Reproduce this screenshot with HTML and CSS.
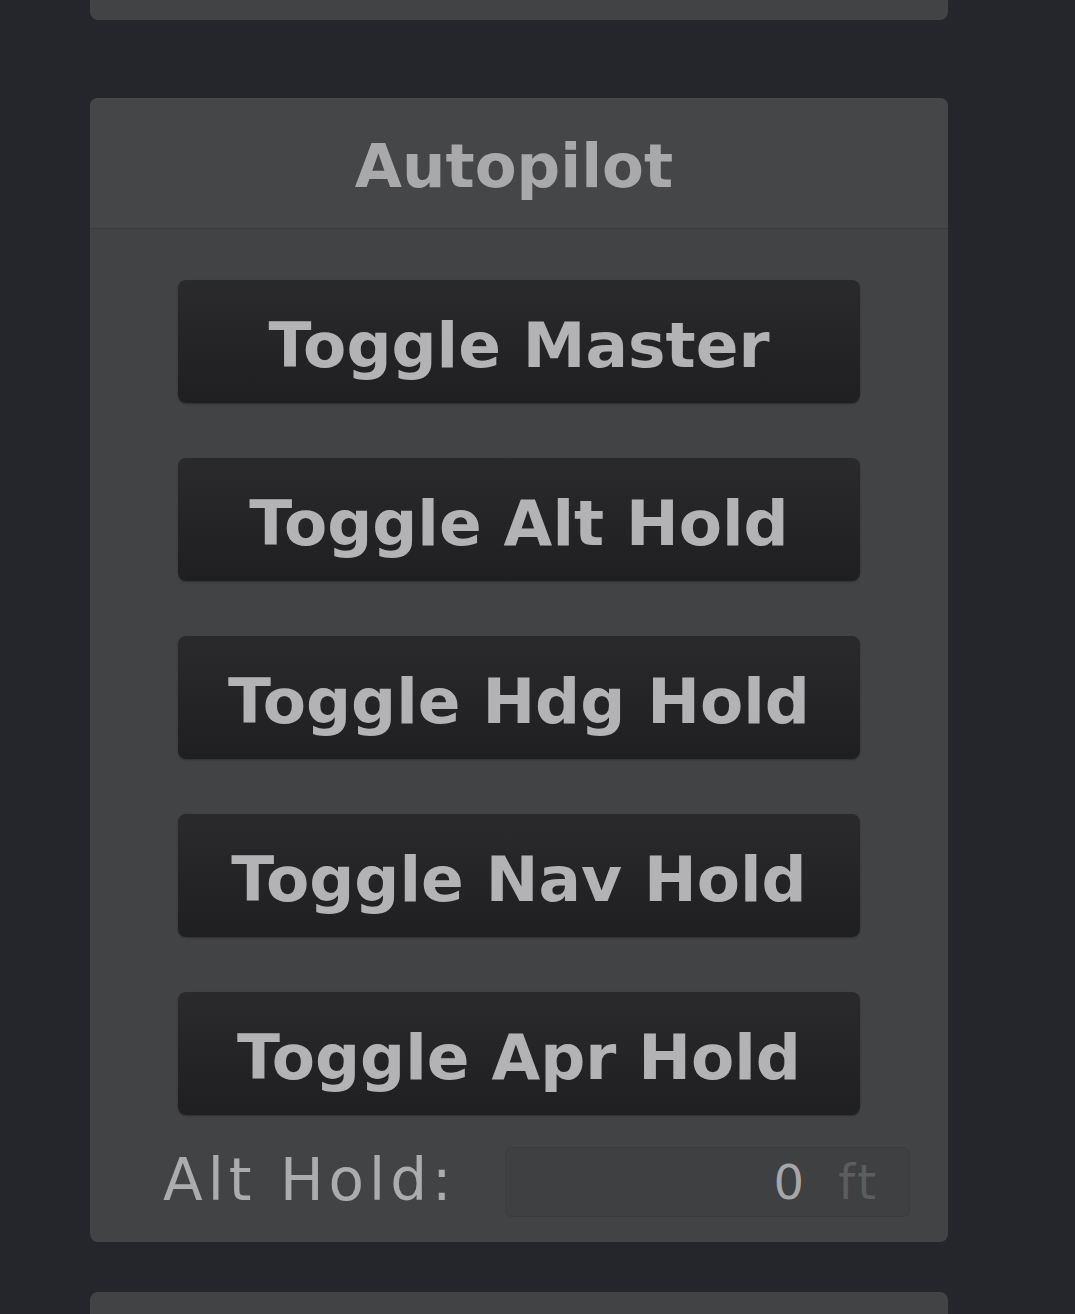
FILE: index.html
```html
<!DOCTYPE html>
<html>
<head>
<meta charset="utf-8">
<link rel="stylesheet" href="styles.css">
</head>
<body>
<div class="page">
  <div class="card card-top"></div>
  <section class="card panel">
    <header class="panel-head">Autopilot</header>
    <div class="panel-body">
      <button class="btn">Toggle Master</button>
      <button class="btn">Toggle Alt Hold</button>
      <button class="btn">Toggle Hdg Hold</button>
      <button class="btn">Toggle Nav Hold</button>
      <button class="btn">Toggle Apr Hold</button>
    </div>
    <div class="alt-row">
      <span class="alt-label">Alt Hold:</span>
      <div class="alt-input"><span class="alt-val">0</span><span class="alt-unit">ft</span></div>
    </div>
  </section>
  <div class="card card-bottom"></div>
</div>
</body>
</html>
```

FILE: styles.css
```css
html, body {
  margin: 0;
  padding: 0;
  background: #24262c;
  height: 1314px;
  overflow: hidden;
}
.page {
  display: flex;
  flex-direction: column;
  gap: 78px;
  padding-left: 90px;
  width: 858px;
  margin-top: -60px;
}
.card {
  background: #424345;
  border-radius: 8px;
}
.card-top {
  height: 80px;
}
.panel {
  height: 1144px;
  display: flex;
  flex-direction: column;
}
.panel-head {
  height: 131px;
  border-bottom: 1px solid #3a3b3d;
  background: #454648;
  border-radius: 8px 8px 0 0;
  display: flex;
  align-items: center;
  justify-content: center;
  font-family: "DejaVu Sans", sans-serif;
  font-weight: bold;
  font-size: 61px;
  color: #a9a9ab;
  padding-top: 4px;
  padding-right: 10px;
  box-sizing: border-box;
}
.panel-body {
  display: flex;
  flex-direction: column;
  gap: 55px;
  padding: 51px 88px 0 88px;
}
.btn {
  height: 123px;
  border: none;
  border-radius: 8px;
  background: linear-gradient(#2a2a2c, #1f1f21);
  box-shadow: 0 1px 2px rgba(0,0,0,0.3);
  color: #b3b3b5;
  font-family: "DejaVu Sans", sans-serif;
  font-weight: bold;
  font-size: 63px;
  padding: 8px 0 0 0;
}
.alt-row {
  display: flex;
  align-items: center;
  padding: 32px 38px 0 73px;
  gap: 43px;
}
.alt-label {
  font-family: "DejaVu Sans", sans-serif;
  font-size: 58px;
  letter-spacing: 5px;
  color: #acacae;
  width: 299px;
  white-space: nowrap;
  margin-top: -4px;
}
.alt-input {
  flex: 1;
  height: 70px;
  box-sizing: border-box;
  border: 1px solid #3b3c3e;
  border-radius: 7px;
  background: #3f4042;
  display: flex;
  align-items: center;
  justify-content: flex-end;
  padding-right: 30px;
  gap: 30px;
  font-family: "DejaVu Sans", sans-serif;
  font-size: 48px;
}
.alt-val {
  color: #a7a7a9;
  margin-right: 4px;
}
.alt-unit {
  color: #5c5d5f;
  letter-spacing: 3px;
}
.card-bottom {
  height: 80px;
  margin-top: -28px;
}
```
